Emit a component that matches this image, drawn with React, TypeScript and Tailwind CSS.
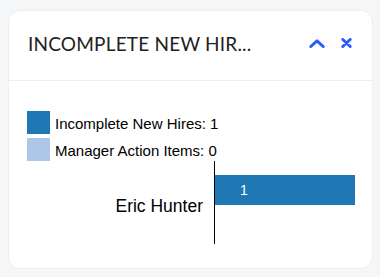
import React from 'react';

const legend = [
    { label: 'Incomplete New Hires: 1', color: '#1f77b4' },
    { label: 'Manager Action Items: 0', color: '#aec7e8' },
];

const App = () => {
    return (
        <div className="min-h-screen bg-[#f5f6f8] pt-[10px] pl-[8px] pr-[7px]">
            <div className="w-[365px] h-[259px] bg-white rounded-[12px] border border-[#eceef1] flex flex-col overflow-hidden">
                {/* Header */}
                <div className="h-[70px] shrink-0 flex items-start justify-between pl-[19px] pr-[20px] pt-[20px] border-b border-[#eceef1]">
                    <h2 className="text-[19px] leading-[26px] text-[#222] tracking-[0.2px]" style={{ fontFamily: 'Lato, "Open Sans", sans-serif' }}>
                        INCOMPLETE NEW HIR...
                    </h2>
                    <div className="flex items-center gap-[16px] pt-[7px] mr-[0px] text-[#2a5bff]">
                        {/* chevron up */}
                        <svg width="16" height="9" viewBox="0 0 16 9">
                            <polyline points="1.8,7.5 8,1.8 14.2,7.5" fill="none" stroke="currentColor" strokeWidth="3" strokeLinecap="round" strokeLinejoin="round" />
                        </svg>
                        {/* close */}
                        <svg width="11" height="10" viewBox="0 0 11 10">
                            <path d="M1.8 1.5 L9.2 8.5 M9.2 1.5 L1.8 8.5" fill="none" stroke="currentColor" strokeWidth="3" strokeLinecap="round" />
                        </svg>
                    </div>
                </div>

                {/* Chart */}
                <div className="flex-1">
                    <svg width="363" height="187" style={{ fontFamily: '"Liberation Sans", Arial, sans-serif' }}>
                        {legend.map((l, i) => (
                            <g key={l.label} transform={`translate(18, ${30 + i * 27})`}>
                                <rect width="23" height="23" fill={l.color} />
                                <text x="28" y="18" fontSize="15" fill="#000">{l.label}</text>
                            </g>
                        ))}
                        <rect x="206" y="94" width="140" height="30" fill="#1f77b4" />
                        <text x="231" y="114" fontSize="14" fill="#fff">1</text>
                        <line x1="205.5" y1="80" x2="205.5" y2="163" stroke="#000" strokeWidth="1" />
                        <text x="194" y="131" fontSize="17.5" textAnchor="end" fill="#000">Eric Hunter</text>
                    </svg>
                </div>
            </div>
        </div>
    );
};

export default App;
